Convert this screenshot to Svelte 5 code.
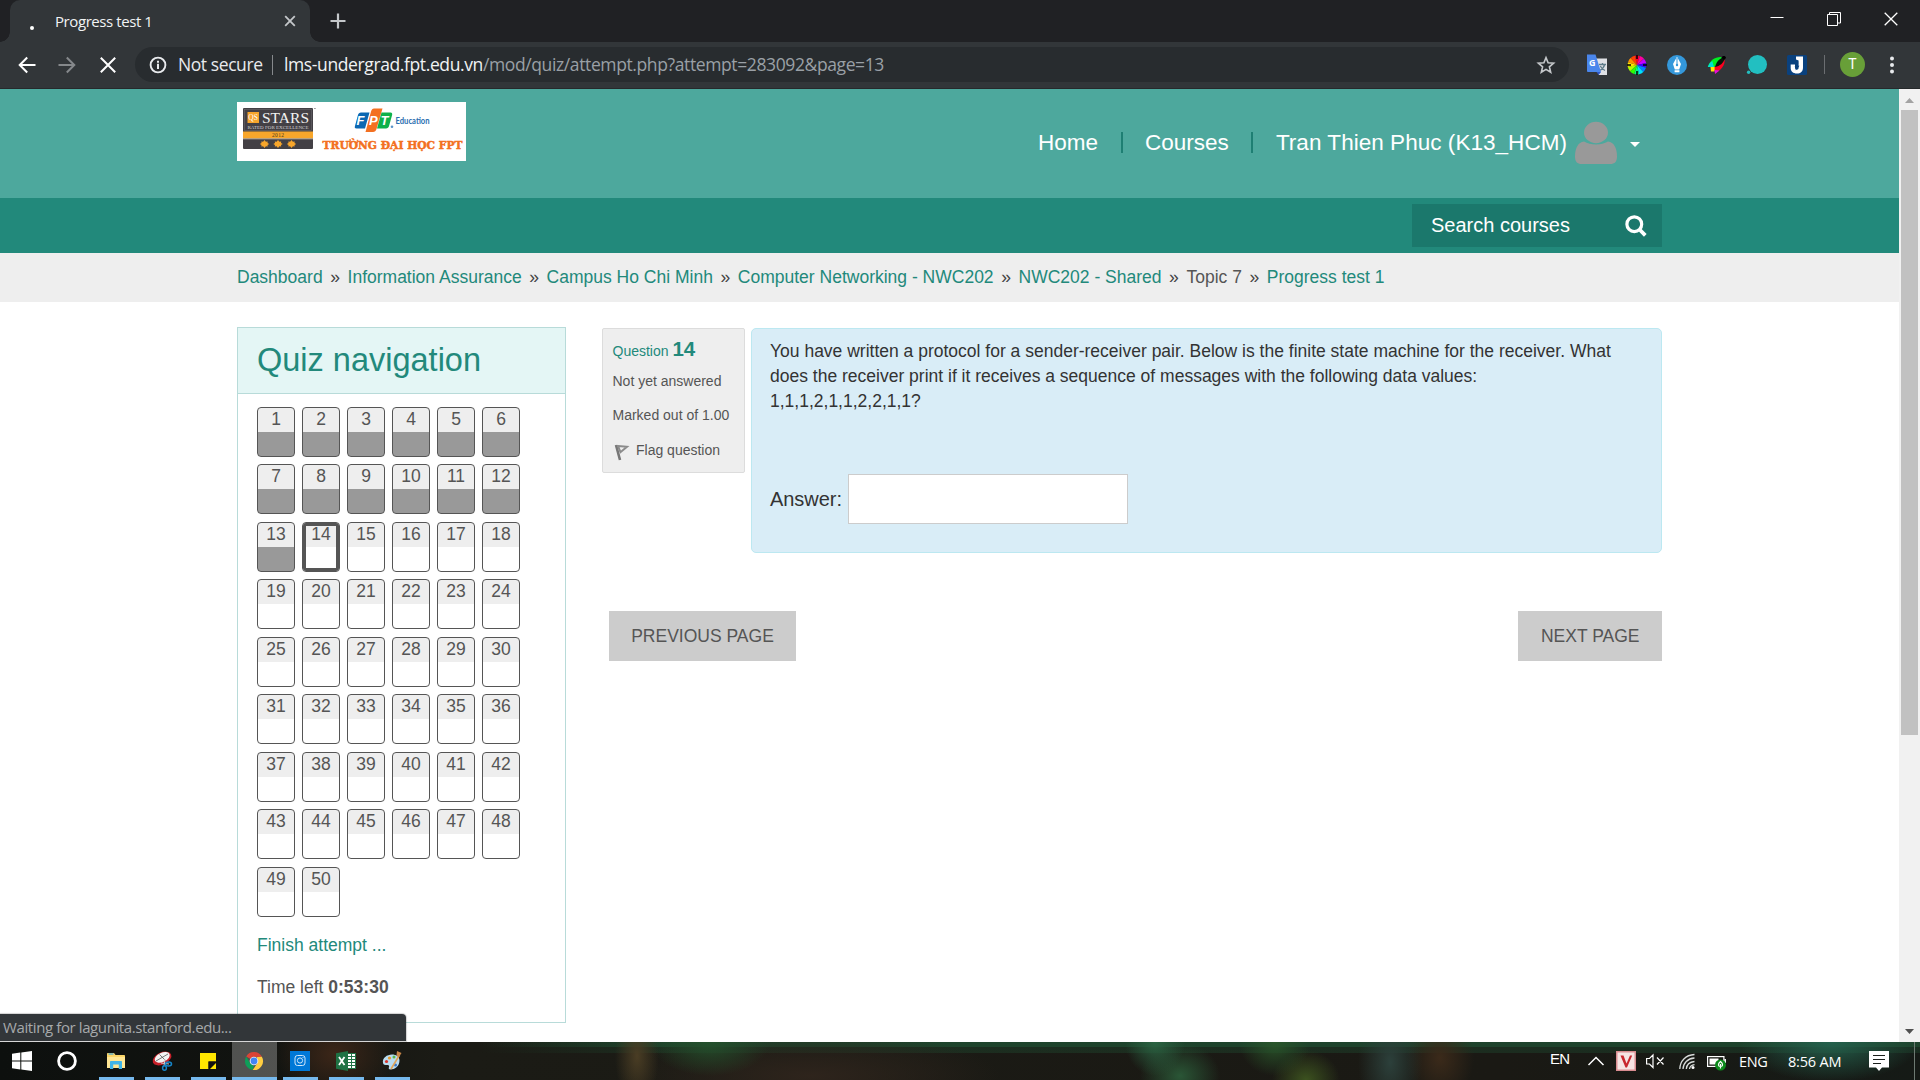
<script>
  const questions = Array.from({ length: 50 }, (_, i) => i + 1);
  const crumbs = [
    'Dashboard',
    'Information Assurance',
    'Campus Ho Chi Minh',
    'Computer Networking - NWC202',
    'NWC202 - Shared',
    'Topic 7',
    'Progress test 1'
  ];
  const hues = ['#ff0030', '#ff00a0', '#c800ff', '#4000ff', '#0080ff', '#00e0ff', '#00ff80', '#30ff00', '#b0ff00', '#ffe600', '#ff9000', '#ff4000'];
</script>

<div class="screen">
  <div class="tabstrip">
    <div class="tab">
      <svg class="spin" width="30" height="42" viewBox="0 0 30 42"><circle cx="12" cy="28" r="2" fill="#fff" /></svg>
      <span class="tab-title">Progress test 1</span>
      <svg class="tab-x" width="12" height="12" viewBox="0 0 12 12"><path d="M1.2 1.2l9.6 9.6M10.8 1.2l-9.6 9.6" stroke="#c4c7ca" stroke-width="1.8" /></svg>
    </div>
    <svg class="plus" width="16" height="16" viewBox="0 0 16 16"><path d="M8 .5v15M.5 8h15" stroke="#c4c7ca" stroke-width="2.2" /></svg>
    <div class="winctl">
      <svg width="14" height="14" viewBox="0 0 14 14"><path d="M.5 5.5h13" stroke="#fff" /></svg>
      <svg width="14" height="14" viewBox="0 0 14 14" fill="none" stroke="#fff"><path d="M.5 2.5h10v11h-10zM2.5 2.5v-2h11v10.500h-3" /></svg>
      <svg width="14" height="14" viewBox="0 0 14 14"><path d="M.7.7l12.600 12.600M13.300.7L.7 13.300" stroke="#fff" stroke-width="1.300" /></svg>
    </div>
  </div>

  <div class="toolbar">
    <svg class="nav-i" width="18" height="18" viewBox="0 0 18 18" fill="none" stroke="#fff" stroke-width="2"><path d="M17.500 9H2M9.200 1.500L1.700 9l7.500 7.500" /></svg>
    <svg class="nav-i fwd" width="18" height="18" viewBox="0 0 18 18" fill="none" stroke="#85888b" stroke-width="2"><path d="M.5 9H16M8.800 1.500L16.300 9l-7.500 7.500" /></svg>
    <svg class="nav-i stop" width="16" height="16" viewBox="0 0 16 16" fill="none" stroke="#fff" stroke-width="2"><path d="M.8.8l14.400 14.400M15.200.8L.8 15.200" /></svg>
    <div class="omnibox">
      <svg width="18" height="18" viewBox="0 0 18 18"><circle cx="9" cy="9" r="7.400" fill="none" stroke="#e8eaed" stroke-width="1.900" /><path d="M8 7.800h2V13H8zM8 4.800h2v1.900H8z" fill="#e8eaed" /></svg>
      <span class="notsec">Not secure</span>
      <i class="obar"></i>
      <span class="url"><b>lms-undergrad.fpt.edu.vn</b>/mod/quiz/attempt.php?attempt=283092&amp;page=13</span>
      <svg class="star" width="18" height="18" viewBox="0 0 18 18"><path d="M9 1.600l2.100 5.200 5.500.4-4.200 3.600 1.300 5.500L9 13.400l-4.700 2.900 1.300-5.500L1.400 7.200l5.500-.4z" fill="none" stroke="#c4c7ca" stroke-width="1.600" /></svg>
    </div>
    <div class="exts">
      <svg width="22" height="22" viewBox="0 0 22 22">
        <path d="M9 4.500h12v16.500h-8z" fill="#dfe1e5" /><path d="M13 10.500h7M16.500 9v1.500M18.700 10.500c-.8 3-2.500 4.800-5 6M14.300 12c1 2 2.500 3.500 4.700 4.500" stroke="#607d8b" stroke-width="1.300" fill="none" />
        <path d="M1 .5h8.500L15 18H2.200C1.500 18 1 17.500 1 17z" fill="#4a86ec" /><path d="M10.500 18H15l-2.300 3z" fill="#3057c8" />
        <text x="3" y="12" font-size="9" font-weight="700" fill="#fff">G</text>
      </svg>
      <svg width="20" height="20" viewBox="0 0 20 20">
        {#each hues as h, i}
          <path d="M10 10L8 .8A9.500 9.500 0 0 1 12.800 1z" fill={h} transform="rotate({i * 30} 10 10)" />
        {/each}
        <path d="M10 0v4M10 16v4M0 10h4M16 10h4" stroke="#000" stroke-width="1.500" />
      </svg>
      <svg width="20" height="20" viewBox="0 0 20 20"><circle cx="10" cy="10" r="10" fill="#3498db" /><path d="M10 1.800l4 7.200-1.800 5.500H7.800L6 9zM7.600 15.300h4.800v2H7.600z" fill="#fff" /><path d="M10 3v6" stroke="#3498db" /><circle cx="10" cy="10" r="1.200" fill="#3498db" /></svg>
      <svg width="20" height="20" viewBox="0 0 20 20">
        <path d="M.8 12C3 5 8 1.500 15 2L9 12z" fill="#00f020" /><path d="M.8 12c1-3 2.500-4.800 4.500-6L7 12z" fill="#00e0d0" /><path d="M3.500 12h5l-1 4.500H4z" fill="#ffe600" /><path d="M17.500 4c1 6-3.500 11-9.500 14.500L7.500 12z" fill="#ff0020" /><path d="M7.500 15l5 .5-4.500 3.500z" fill="#e010e0" /><path d="M8 12C9.500 7 12 3.500 16 3l1.500 1c-1 4-4.500 7-9.500 8z" fill="#07180a" /><path d="M14.500 2.500C16 .5 18.500.5 19 3l-2 2z" fill="#000" />
      </svg>
      <svg width="20" height="20" viewBox="0 0 20 20"><circle cx="10.500" cy="9.500" r="9.500" fill="#22bfc1" /><circle cx="1.600" cy="17.200" r="1.700" fill="#22bfc1" /></svg>
      <svg width="20" height="20" viewBox="0 0 20 20"><rect width="20" height="20" rx="1.500" fill="#0a417e" /><path d="M9 1.500h7v11c0 4-2.500 6-6 6-4 0-6.300-2.200-6.300-5.500V9.500h4.300v3.300c0 1.200.6 1.900 1.700 1.900 1.300 0 1.900-.7 1.900-2.200V5.500L9 4.500z" fill="#fff" /><path d="M11.500 7.500l-4 4.500h2.300l-1.300 3.500 4-4.700h-2.400z" fill="#0a417e" /></svg>
    </div>
    <i class="tbar"></i>
    <div class="avatar">T</div>
    <svg class="dots" width="6" height="18" viewBox="0 0 6 18" fill="#e8eaed"><circle cx="3" cy="2.500" r="2" /><circle cx="3" cy="9" r="2" /><circle cx="3" cy="15.500" r="2" /></svg>
  </div>

  <div class="viewport">
    <main>
      <header>
        <div class="wrap head">
          <svg class="logo" width="229" height="59" viewBox="0 0 229 59">
            <rect width="229" height="59" fill="#fff" />
            <rect x="6" y="6" width="70" height="41" rx="1" fill="#434045" />
            <rect x="7.500" y="7.500" width="67" height="21" fill="none" stroke="#6a676b" stroke-width=".6" />
            <rect x="6" y="29.500" width="70" height="7" fill="#f8a62b" /><path d="M6 36.800h70" stroke="#cfc8be" stroke-width=".8" />
            <rect x="10.500" y="10" width="11.500" height="11" fill="#f6a52c" />
            <g font-family="'Liberation Serif', serif">
              <text x="11.300" y="17.500" font-size="7.500" fill="#fff">QS</text>
              <text x="25" y="21" font-size="15" textLength="47" lengthAdjust="spacingAndGlyphs" fill="#f1f1f1">STARS</text>
              <text x="10.500" y="27" font-size="5" textLength="61" lengthAdjust="spacingAndGlyphs" fill="#d4d2d4">RATED FOR EXCELLENCE</text>
              <text x="35" y="34.800" font-size="5.500" textLength="12" fill="#4b3a20">2012</text>
            </g>
            {#each [27.500, 41, 54.500] as x}
              <path d="M{x} 38l1.400 1.700 1.800-.2-.2 1.500 1.700 1-1.700 1 .2 1.500-1.800-.2L{x} 46l-1.400-1.700-1.800.2.200-1.500-1.700-1 1.700-1-.2-1.500 1.800.2z" fill="#f8a62b" />
            {/each}
            <path d="M77 6.500h1.800" stroke="#777" stroke-width=".7" />
            <path d="M124 10.500h8.500l-4.500 16h-8.500c-1.500 0-2-1-1.600-2.300l3-11c.5-1.700 1.500-2.700 3.100-2.700z" fill="#0b67b2" />
            <path d="M137 6.500h8.500l-6 20.500c-.6 2-1.700 3-3.500 3h-7.500l5.500-20.500c.6-2 1.500-3 3-3z" fill="#f37021" />
            <path d="M144.500 10.500h9c1.500 0 2 1 1.600 2.500l-3 10.800c-.5 1.700-1.500 2.700-3.100 2.700h-9z" fill="#0db14b" />
            <g font-family="'Liberation Sans', sans-serif" font-weight="700" font-style="italic" font-size="13" fill="#fff">
              <text x="119.500" y="23">F</text><text x="132" y="23">P</text><text x="143.500" y="23">T</text>
            </g>
            <circle cx="155" cy="24.700" r="1.300" fill="#5a94c8" />
            <text x="158.500" y="22" font-family="Lato, sans-serif" font-weight="700" font-size="8.500" textLength="34" lengthAdjust="spacingAndGlyphs" fill="#2a6eb0">Education</text>
            <text x="85.500" y="47" font-family="'DejaVu Serif', serif" font-weight="700" font-size="11.800" textLength="140" lengthAdjust="spacingAndGlyphs" fill="#f37021" stroke="#f37021" stroke-width=".5">TRƯỜNG ĐẠI HỌC FPT</text>
          </svg>
          <nav>
            <a class="n1">Home</a><i></i><a class="n2">Courses</a><i></i><a class="n3">Tran Thien Phuc (K13_HCM)</a>
            <svg class="person" width="44" height="42" viewBox="0 0 44 42" fill="#999"><ellipse cx="22" cy="10.500" rx="12" ry="10.700" /><path d="M10 19.500c6.500 4 17.500 4 24 0 6 .5 9 7 9 15 0 5-2 7.500-7 7.500H8c-5 0-7-2.500-7-7.500 0-8 3-14.500 9-15z" /></svg>
            <svg class="caret" width="10" height="5" viewBox="0 0 10 5"><path d="M0 0h10L5 5z" fill="#fff" /></svg>
          </nav>
        </div>
      </header>
      <div class="band">
        <div class="wrap">
          <div class="search"><span>Search courses</span>
            <svg width="22" height="22" viewBox="0 0 22 22" fill="none" stroke="#fff"><circle cx="9.300" cy="9.200" r="7.400" stroke-width="3.200" /><path d="M14.500 14.500l5.800 5.800" stroke-width="3.800" /></svg>
          </div>
        </div>
      </div>
      <div class="crumbbar">
        <div class="wrap crumbs">
          {#each crumbs as c, i}
            {#if i}<span class="sep">»</span>{/if}<span class:plain={c === 'Topic 7'}>{c}</span>
          {/each}
        </div>
      </div>

      <div class="wrap content">
        <aside>
          <h2>Quiz navigation</h2>
          <div class="grid">
            {#each questions as q}
              <div class="cell" class:saved={q <= 13} class:here={q === 14}><span>{q}</span></div>
            {/each}
          </div>
          <p class="finish">Finish attempt ...</p>
          <p class="time">Time left <b>0:53:30</b></p>
        </aside>
        <section>
          <div class="question">
            <div class="info">
              <p class="qno">Question <b>14</b></p>
              <p class="state">Not yet answered</p>
              <p class="grade">Marked out of 1.00</p>
              <p class="flag"><svg width="16" height="18" viewBox="0 0 16 18" fill="none"><path d="M2 2l4 15" stroke="#777" stroke-width="2.600" /><path d="M4 3l9 .7-6.500 5.500z" stroke="#8b8b8b" stroke-width="2" /></svg>Flag question</p>
            </div>
            <div class="formulation">
              <p>You have written a protocol for a sender-receiver pair. Below is the finite state machine for the receiver. What<br />does the receiver print if it receives a sequence of messages with the following data values:<br />1,1,1,2,1,1,2,2,1,1?</p>
              <div class="answer"><label for="ans">Answer:</label><input id="ans" type="text" /></div>
            </div>
          </div>
          <div class="buttons"><button class="prev">PREVIOUS PAGE</button><button>NEXT PAGE</button></div>
        </section>
      </div>
    </main>
    <div class="scroll">
      <svg width="21" height="21" viewBox="0 0 21 21"><path d="M6 14h9l-4.500-5z" fill="#a3a3a3" /></svg>
      <div class="thumb"></div>
      <svg class="down" width="21" height="21" viewBox="0 0 21 21"><path d="M6 8h9l-4.500 5z" fill="#505050" /></svg>
    </div>
    <div class="status">Waiting for lagunita.stanford.edu...</div>
  </div>

  <div class="taskbar">
    <div class="slot start"><svg width="20" height="20" viewBox="0 0 20 20" fill="#fff"><path d="M0 2.800L8.300 1.600V9.500H0zM9.300 1.500L20 0v9.500H9.300zM0 10.500h8.300v7.900L0 17.200zM9.300 10.500H20V20L9.300 18.500z" /></svg></div>
    <div class="slot cortana"><svg width="20" height="20" viewBox="0 0 20 20"><circle cx="10" cy="10" r="8.400" fill="none" stroke="#fff" stroke-width="2.800" /></svg></div>
    <div class="slot on"><svg width="20" height="20" viewBox="0 0 20 20"><path d="M1 3c0-.6.400-1 1-1h6l1.500 2H18c.6 0 1 .4 1 1v11.500H1z" fill="#fbd568" /><path d="M1 6h18v11H1z" fill="#ffe694" /><path d="M2.500 3h5" stroke="#3aa0d8" stroke-width="1.200" /><path d="M4 18v-7c0-.6.400-1 1-1h10c.6 0 1 .4 1 1v7h-3.200v-4.500H7.200V18z" fill="#3fb4e8" /></svg></div>
    <div class="slot on"><svg width="22" height="20" viewBox="0 0 22 20"><ellipse cx="11" cy="7.500" rx="10" ry="6" transform="rotate(-25 11 7.500)" fill="#c6202a" /><ellipse cx="11.500" cy="6.500" rx="8" ry="4.600" transform="rotate(-25 11 7)" fill="#f3f3f3" /><path d="M5 10l12-7M8.500 3.500l6 6" stroke="#555" stroke-width=".8" /><path d="M14 8l-1 7M10 12l8 1" stroke="#ccc" /><ellipse cx="17.500" cy="13" rx="3" ry="2" fill="none" stroke="#1584c8" stroke-width="1.500" /><ellipse cx="13.500" cy="17" rx="1.900" ry="2.300" fill="none" stroke="#1584c8" stroke-width="1.500" /></svg></div>
    <div class="slot on"><svg width="16" height="16" viewBox="0 0 16 16"><path d="M0 0h16v8.500H8.500V16H0z" fill="#ffe600" /><path d="M8.500 16V8.500H16z" fill="#111" /><path d="M10 16l6-6v6z" fill="#ffe600" /></svg></div>
    <div class="slot on active"><svg width="20" height="20" viewBox="0 0 20 20"><path d="M10 10L2.200 5.500A9 9 0 0 1 17.900 5.800L10 6z" fill="#db4437" /><path d="M2.200 5.500L6 12l4 3-1.500 4A9 9 0 0 1 2.200 5.500z" fill="#0f9d58" /><path d="M17.900 5.800A9 9 0 0 1 8.700 19L13.500 12 13 6z" fill="#ffcd40" /><circle cx="10" cy="10" r="4.300" fill="#f1f1f1" /><circle cx="10" cy="10" r="3.400" fill="#4285f4" /></svg></div>
    <div class="slot on"><svg width="20" height="20" viewBox="0 0 20 20"><rect width="20" height="20" fill="#0078d7" /><g fill="none" stroke="#cfe6fa"><rect x="5" y="4.500" width="10" height="10" rx="2.500" /><circle cx="10" cy="9.500" r="2.600" /></g><circle cx="13" cy="6.500" r=".6" fill="#cfe6fa" /></svg></div>
    <div class="slot on"><svg width="20" height="20" viewBox="0 0 20 20"><rect x="10" y="2.500" width="9.500" height="15" fill="#fff" stroke="#217346" /><path d="M12 5.500h7M12 8.500h7M12 11.500h7M12 14.500h7M15.500 3v14" stroke="#217346" stroke-width="1" /><path d="M0 2.200L12 0v20L0 17.800z" fill="#1f7244" /><path d="M3 6l5.500 8M8.500 6L3 14" stroke="#fff" stroke-width="1.800" /></svg></div>
    <div class="slot on"><svg width="20" height="20" viewBox="0 0 20 20"><path d="M1 12C0 7 5 3.500 10 3.500c4 0 7.500 2 7.500 6 0 6-5 9-9 9-2 0-2-1.500-1.500-2.500.6-1.500-.5-2-2-2-2 0-3.500 0-4-2z" fill="#b9dcf0" /><circle cx="4.500" cy="10.500" r="1.600" fill="#d8342c" /><circle cx="7.500" cy="7" r="1.600" fill="#e89a2c" /><circle cx="12" cy="6" r="1.500" fill="#58b848" /><circle cx="13.500" cy="14" r="1.500" fill="#3878c8" /><path d="M17.500 4L9 18" stroke="#e0a458" stroke-width="1.600" /><path d="M15 0l4.500 2-2.500 4-2.500-1.500z" fill="#c98648" /></svg></div>

    <div class="tray">
      <span class="t-en">EN</span>
      <svg class="g-up" width="16" height="20" viewBox="0 0 16 20"><path d="M.5 14L8 6.500l7.500 7.500" fill="none" stroke="#fff" stroke-width="1.500" /></svg>
      <svg class="g-v" width="20" height="20" viewBox="0 0 20 20"><rect width="20" height="20" fill="#d98c90" /><rect x="1.500" y="1.500" width="17" height="17" fill="#f6e3e3" /><path d="M4.500 4.500h3l3 8 3.500-8h2.200l-5.200 12H9.500z" fill="#c8262e" /></svg>
      <svg class="g-snd" width="18" height="20" viewBox="0 0 18 20" fill="none" stroke="#fff" stroke-width="1.200"><path d="M.6 7.500h2.900l3.500-3.500v12.500L3.500 13H.6zM11 6.500l6.500 7M17.500 6.500l-6.500 7" /></svg>
      <svg class="g-wifi" width="17" height="20" viewBox="0 0 17 20" fill="none" stroke="#d8dcda" stroke-width="1.300"><path d="M.8 18C1 10 6.500 4 15.500 3.500M4 18c.3-6 4.500-10.500 11.500-11M7.300 18c.3-4 3.200-7 8.200-7.500M10.500 18c.3-2 2-4 5-4.300" /><circle cx="14" cy="16.500" r="1.500" fill="#fff" stroke="none" /></svg>
      <svg class="g-bat" width="20" height="20" viewBox="0 0 20 20"><rect x=".6" y="5.600" width="16.300" height="9.800" fill="none" stroke="#fff" stroke-width="1.200" /><rect x="2.500" y="7.500" width="9" height="6" fill="#fff" /><path d="M18.200 8v4" stroke="#fff" stroke-width="1.500" /><circle cx="13.500" cy="14" r="5.500" fill="#0c8a1c" /><path d="M13.500 10.500c3 2.500 2.500 5 0 5s-3-2.500 0-5zM13.500 13v4.500" fill="none" stroke="#fff" stroke-width="1.200" /></svg>
      <span class="t-eng">ENG</span>
      <span class="t-time">8:56 AM</span>
      <svg class="g-note" width="20" height="20" viewBox="0 0 20 20"><path d="M0 0h20v16.500h-7L10 20l-3-3.500H0z" fill="#fff" /><path d="M4 4.500h12M4 8.500h12M4 12.500h8" stroke="#1b1f1c" stroke-width="1.200" /></svg>
      <i class="desk"></i>
    </div>
  </div>
</div>

<style>
  :global(body) { background: #fff; overflow: hidden; }
  .screen { width: 1920px; height: 1080px; display: flex; flex-direction: column; overflow: hidden; font-family: 'Open Sans', 'Noto Sans', sans-serif; }
  svg { display: block; flex: none; overflow: visible; }
  p, h2 { margin: 0; font-weight: 400; }

  .tabstrip { height: 42px; flex: none; background: #202124; display: flex; align-items: flex-start; }
  .tab { margin-left: 10px; width: 300px; height: 42px; box-sizing: border-box; background: #323639; border-radius: 10px 10px 0 0; display: flex; align-items: center; padding-left: 10px; position: relative; }
  .tab::before, .tab::after { content: ''; position: absolute; bottom: 0; width: 10px; height: 10px; }
  .tab::before { left: -10px; background: radial-gradient(circle at 0 0, #202124 9.500px, #323639 10px); }
  .tab::after { right: -10px; background: radial-gradient(circle at 100% 0, #202124 9.500px, #323639 10px); }
  .tab-title { margin-left: 5px; width: 229px; font-size: 15px; line-height: 20px; color: #f1f3f4; letter-spacing: -.42px; white-space: nowrap; }
  .tab-title, .tab-x { margin-bottom: 1px; }
  .plus { margin: 13px 0 0 20px; }
  .winctl { margin: 12px 22px 0 auto; display: flex; gap: 43px; }

  .toolbar { height: 47px; box-sizing: border-box; padding-bottom: 1px; flex: none; background: #323639; border-bottom: 1px solid #26292b; display: flex; align-items: center; }
  .nav-i { margin-left: 18px; }
  .fwd { margin-left: 22px; }
  .stop { margin-left: 24px; }
  .omnibox { margin-left: 19px; width: 1434px; height: 35px; box-sizing: border-box; padding: 0 14px 0 14px; border-radius: 18px; background: #282c2f; display: flex; align-items: center; font-size: 17.500px; line-height: 24px; white-space: nowrap; color: #e8eaed; }
  .notsec { margin-left: 11px; width: 94px; letter-spacing: -.42px; }
  .notsec, .url { margin-bottom: 1px; }
  .obar { width: 1px; height: 20px; background: #86898c; }
  .url { margin-left: 11px; letter-spacing: -.385px; color: #9aa0a6; }
  .url b { font-weight: 400; color: #f1f3f4; }
  .star { margin-left: auto; }
  .exts { margin-left: 17px; display: flex; align-items: center; gap: 20px; }
  .exts > svg:first-child { margin-right: -1px; }
  .tbar { margin-left: 17px; width: 1px; height: 19px; background: #6b6e71; }
  .avatar { margin-left: 15px; width: 25px; height: 25px; border-radius: 50%; background: #689f38; color: #fff; font: 14px/25px Roboto, sans-serif; text-align: center; }
  .dots { margin-left: 24px; }

  .viewport { height: 953px; flex: none; display: flex; position: relative; font-family: 'Liberation Sans', Arial, sans-serif; font-size: 17.500px; line-height: 25px; color: #555; }
  main { width: 1899px; height: 953px; overflow: hidden; }
  .wrap { width: 1425px; margin: 0 auto; }
  header { height: 109px; background: #4da89d; }
  .head { display: flex; justify-content: space-between; }
  .logo { margin-top: 13px; }
  nav { height: 107px; display: flex; align-items: center; font-size: 22.500px; color: #fff; white-space: nowrap; margin-right: 22px; }
  nav a { margin-bottom: 1px; }
  nav i { width: 2px; height: 21px; margin: 0 22.500px; background: #1e7f73; }
  .n3 { letter-spacing: .04px; }
  .person { margin: 0 0 0 7px; }
  .caret { margin: 4px 0 0 12px; }
  .band { height: 55px; background: #22897b; }
  .band .wrap { display: flex; justify-content: flex-end; }
  .search { margin-top: 6px; width: 250px; height: 43px; box-sizing: border-box; padding: 0 15px 0 19px; background: #1b786c; color: #fff; font-size: 20px; display: flex; align-items: center; justify-content: space-between; }
  .crumbbar { height: 49px; background: #eee; }
  .crumbs { display: flex; padding-top: 12px; color: #22897b; white-space: nowrap; }
  .sep { margin: 0 7.600px; color: #444; }
  .plain { color: #555; }

  .content { display: flex; align-items: flex-start; padding-top: 25px; }
  aside { width: 329px; height: 696px; box-sizing: border-box; border: 1px solid #b8dbd9; }
  h2 { height: 65px; border-bottom: 1px solid #b8dbd9; background: #e4f6f5; padding-left: 19px; font-size: 32.500px; line-height: 65px; color: #22897b; }
  .grid { padding: 12.900px 0 0 19px; display: grid; grid-template-columns: repeat(6, 38px); grid-auto-rows: 50px; gap: 7.500px 7px; }
  .cell { box-sizing: border-box; border: 1px solid #555; border-radius: 4px; overflow: hidden; text-align: center; background: linear-gradient(#eee 24px, #fff 24px); position: relative; }
  .cell span { display: block; line-height: 23px; }
  .saved { background: linear-gradient(#eee 24px, #999 24px); }
  .here::after { content: ''; position: absolute; inset: -1px; border: 4px solid #555; border-radius: 4px; }
  .finish { margin: 16px 0 0 19px; color: #22897b; }
  .time { margin: 17px 0 0 19px; }

  section { margin-left: 36px; width: 1060px; }
  .question { display: flex; align-items: flex-start; gap: 6px; padding-top: 1px; }
  .info { width: 143px; height: 145px; box-sizing: border-box; border: 1px solid #dcdcdc; border-radius: 2px; background: #eee; padding-left: 9.500px; font-size: 14px; line-height: 18px; white-space: nowrap; }
  .qno { height: 25px; margin-top: 7px; line-height: 25px; color: #22897b; }
  .qno b { font-size: 20.500px; }
  .state { margin-top: 11px; }
  .grade { margin-top: 16px; }
  .flag { margin-top: 17px; display: flex; gap: 6px; padding-left: 1.500px; }
  .flag svg { margin-top: 2px; }
  .formulation { width: 911px; height: 225px; box-sizing: border-box; border: 1px solid #bce8f1; border-radius: 5px; background: #d9edf7; padding: 10px 0 0 18px; color: #333; }
  .answer { display: flex; align-items: center; margin-top: 60px; }
  .answer label { width: 78px; font-size: 20px; letter-spacing: -.05px; }
  .answer input { width: 280px; height: 50px; box-sizing: border-box; border: 1px solid #ccc; background: #fff; padding: 0; }
  .buttons { display: flex; justify-content: space-between; margin: 58px 0 0 7px; }
  button { height: 50px; border: 0; padding: 0 22.500px; background: #ccc; color: #555; font: 17.500px 'Liberation Sans', Arial, sans-serif; white-space: nowrap; }
  .prev { width: 187px; padding: 0; }

  .scroll { width: 21px; background: #f1f1f1; display: flex; flex-direction: column; align-items: center; }
  .thumb { width: 17px; height: 625px; background: #c1c1c1; }
  .down { margin-top: auto; }
  .status { position: absolute; left: 0; bottom: 1px; width: 406px; height: 27px; box-sizing: border-box; padding-left: 3px; background: #323639; border-radius: 0 4px 0 0; box-shadow: 0 0 1px 1px rgba(0, 0, 0, .18); color: #a6a9ab; font: 15px/27px 'Open Sans', 'Noto Sans', sans-serif; letter-spacing: -.39px; white-space: nowrap; }

  .taskbar {
    height: 38px; flex: none; display: flex; position: relative; color: #fff;
    background:
      radial-gradient(ellipse 22px 50px at 637px 14px, #4a3d24, transparent),
      radial-gradient(ellipse 60px 34px at 710px 0, #24502c, transparent),
      radial-gradient(ellipse 30px 34px at 1155px 0, #2b6342, transparent),
      radial-gradient(ellipse 40px 34px at 1180px 34px, #2a5636, transparent),
      radial-gradient(ellipse 36px 34px at 1275px 0, #29552a, transparent),
      radial-gradient(ellipse 34px 30px at 1306px 38px, #3c521f, transparent),
      radial-gradient(ellipse 32px 60px at 1390px 20px, #2c403b, transparent),
      radial-gradient(ellipse 34px 45px at 1440px 16px, #3b2a1a, transparent),
      radial-gradient(ellipse 90px 40px at 1830px 0, #24604c, transparent),
      radial-gradient(ellipse 60px 45px at 335px 12px, #3c2618, transparent),
      radial-gradient(ellipse 190px 45px at 810px 34px, #2e241c, transparent),
      linear-gradient(90deg, #0d100e00 480px, #1e442c 680px, #1e422c 100%) 0 0 / 100% 5px no-repeat,
      linear-gradient(90deg, #0d100e00 480px, #1e442c77 680px, #1e422c77 100%) 0 0 / 100% 11px no-repeat,
      linear-gradient(90deg, #0d100e, #111310 260px, #1b1b15 440px, #1a1914 1500px, #151a16);
  }
  .slot { width: 46px; height: 38px; display: flex; align-items: center; justify-content: center; position: relative; }
  .start { width: 44px; }
  .cortana { margin-right: 3px; }
  .on::after { content: ''; position: absolute; left: 6px; bottom: 0; width: 35px; height: 3px; background: #76b9ed; }
  .active::before { content: ''; position: absolute; inset: 0 0 0 1px; background: rgba(255, 255, 255, .27); }
  .active::after { left: 1px; width: 45px; }
  .active svg { position: relative; }
  .tray { margin-left: auto; display: flex; align-items: center; font-size: 14.500px; line-height: 20px; white-space: nowrap; }
  .t-en { width: 21px; font: 15px/20px 'Liberation Sans', Arial, sans-serif; letter-spacing: -.7px; margin-bottom: 4px; }
  .g-up { margin-left: 17px; }
  .g-v { margin-left: 12px; }
  .g-snd { margin-left: 10px; }
  .g-wifi { margin-left: 15px; }
  .g-bat { margin-left: 11px; }
  .t-eng, .t-time { margin-top: 1px; }
  .t-eng { margin-left: 12px; width: 29px; letter-spacing: -.4px; }
  .t-time { margin-left: 20px; width: 55px; letter-spacing: -.2px; }
  .g-note { margin-left: 26px; }
  .desk { margin-left: 25px; width: 1px; height: 38px; background: #6d7a72; margin-right: 5px; }
</style>
